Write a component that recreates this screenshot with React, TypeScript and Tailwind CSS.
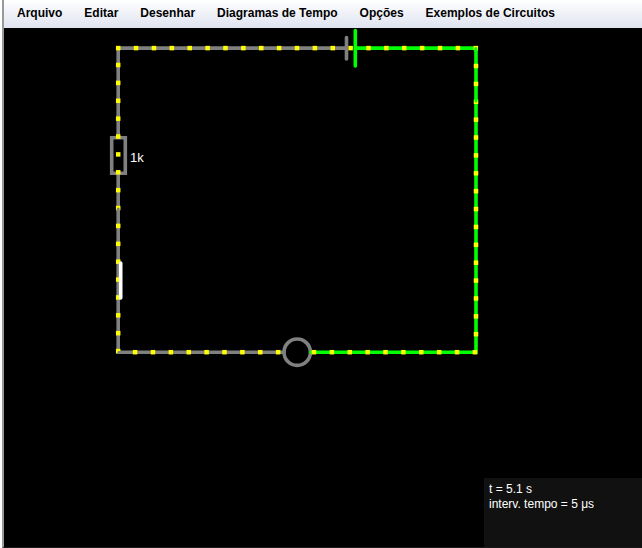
const menuItems = ["Arquivo", "Editar", "Desenhar", "Diagramas de Tempo", "Opções", "Exemplos de Circuitos"];

const STEP = 17.88;
const run = (start: number, count: number) => Array.from({ length: count }, (_, i) => start + i * STEP);

const dots: [number, number][] = [
  ...run(118.2, 21).map((x): [number, number] => [x, 48.1]),
  ...run(65, 17).map((y): [number, number] => [118.2, y]),
  ...run(66, 16).map((y): [number, number] => [476, y]),
  ...run(135.1, 9).map((x): [number, number] => [x, 352.2]),
  ...run(314, 10).map((x): [number, number] => [x, 352.2]),
];

function MenuBar() {
  return (
    <nav className="flex h-7 shrink-0 items-center overflow-hidden border-b border-[#dfe3ee] bg-linear-to-b from-white to-[#e0e4f0] px-[2px]">
      {menuItems.map((label) => (
        <button key={label} type="button" className="px-[11px] pb-[2px] text-xs font-bold whitespace-nowrap text-black">
          {label}
        </button>
      ))}
    </nav>
  );
}

function Circuit() {
  return (
    <svg className="block w-full flex-1" role="img" aria-label="Circuito">
      <g transform="translate(-4 -28)" fill="none" strokeWidth="3.6" strokeLinecap="round">
        <g stroke="#808080">
          <path d="M346.5 48.1H118.2V137M118.2 173V352.2H284" />
          <path d="M346.5 37.5V59" />
          <path d="M111.7 137.7H125.3V173.3H111.7Z" />
          <circle cx="297.2" cy="352.2" r="13.2" />
        </g>
        <g stroke="#00ff00">
          <path d="M355.3 48.1H476V352.2H311" />
          <path d="M355.3 30.5V66" />
        </g>
        <g fill="#ffff00">
          {dots.map(([x, y], i) => (
            <rect key={i} x={x - 2.25} y={y - 2.25} width="4.5" height="4.5" />
          ))}
        </g>
        <path d="M118.2 209V211M118.8 352.4H121" stroke="#808080" strokeWidth="3" />
        <path d="M475.8 48.5V51M476 101V99" stroke="#00ff00" strokeWidth="3" />
        <path d="M120.7 263V298" stroke="#ffffff" />
        <text x="130" y="162" fill="#ffffff" fontSize="13">1k</text>
      </g>
    </svg>
  );
}

export default function App() {
  return (
    <div className="flex h-screen flex-col border-l-2 border-white bg-black font-['Liberation_Sans',Arial,sans-serif]">
      <div className="relative flex min-h-0 flex-1 flex-col border-b border-l-2 border-b-[#1a1a1a] border-l-[#999999]">
        <MenuBar />
        <Circuit />
        <div className="absolute right-0 bottom-0 h-[69px] w-[158px] bg-[#111111] px-[5px] pt-1 text-xs leading-[15px] text-white">
          <p>t = 5.1 s</p>
          <p>interv. tempo = 5 μs</p>
        </div>
      </div>
    </div>
  );
}
